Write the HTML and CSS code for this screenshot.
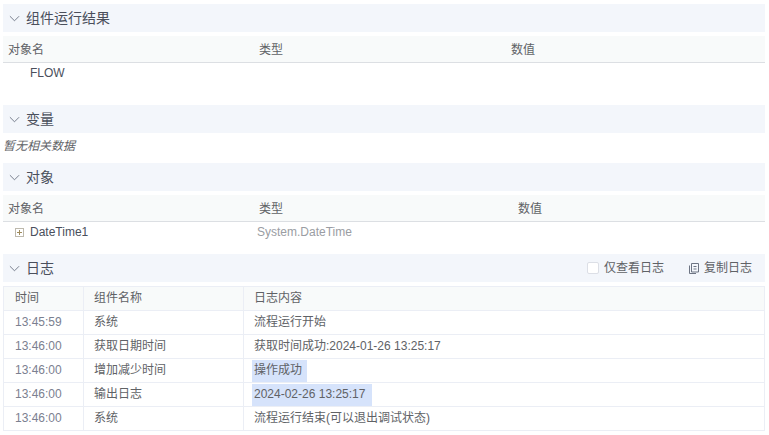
FILE: index.html
```html
<!DOCTYPE html>
<html lang="zh">
<head>
<meta charset="utf-8">
<title>调试结果</title>
<link rel="stylesheet" href="styles.css">
</head>
<body>
<main class="page">
  <section class="section sec-result">
    <header class="bar">
      <svg class="chev" viewBox="0 0 12 12"><path d="M1 3.500 6 8.500 11 3.500"/></svg>
      <h2>组件运行结果</h2>
    </header>
    <div class="thead">
      <span class="c1">对象名</span><span class="c2">类型</span><span class="c3">数值</span>
    </div>
    <div class="trow"><span class="c1 name indent">FLOW</span></div>
  </section>

  <section class="section sec-var">
    <header class="bar">
      <svg class="chev" viewBox="0 0 12 12"><path d="M1 3.500 6 8.500 11 3.500"/></svg>
      <h2>变量</h2>
    </header>
    <p class="empty">暂无相关数据</p>
  </section>

  <section class="section sec-obj">
    <header class="bar">
      <svg class="chev" viewBox="0 0 12 12"><path d="M1 3.500 6 8.500 11 3.500"/></svg>
      <h2>对象</h2>
    </header>
    <div class="thead">
      <span class="c1">对象名</span><span class="c2">类型</span><span class="c3 wide">数值</span>
    </div>
    <div class="trow">
      <span class="c1 name tree">
        <svg class="plus" viewBox="0 0 9 9"><rect x=".5" y=".5" width="8" height="8"/><path d="M2 4.500h5M4.500 2v5"/></svg>DateTime1
      </span>
      <span class="c2 type">System.DateTime</span>
    </div>
  </section>

  <section class="section">
    <header class="bar">
      <svg class="chev" viewBox="0 0 12 12"><path d="M1 3.500 6 8.500 11 3.500"/></svg>
      <h2>日志</h2>
      <div class="tools">
        <label class="check"><span class="box"></span>仅查看日志</label>
        <span class="copy">
          <svg class="copy-icon" viewBox="0 0 10 11"><path d="M2.500 .5h7v8.500h-7zM.5 2.500v8h6.500M4.500 3.500h3M4.500 6h3"/></svg>复制日志
        </span>
      </div>
    </header>
    <table class="log">
      <thead><tr><th>时间</th><th>组件名称</th><th>日志内容</th></tr></thead>
      <tbody>
        <tr><td>13:45:59</td><td>系统</td><td>流程运行开始</td></tr>
        <tr><td>13:46:00</td><td>获取日期时间</td><td>获取时间成功:2024-01-26 13:25:17</td></tr>
        <tr><td>13:46:00</td><td>增加减少时间</td><td class="hl"><mark>操作成功</mark></td></tr>
        <tr><td>13:46:00</td><td>输出日志</td><td class="hl"><mark class="date">2024-02-26 13:25:17</mark></td></tr>
        <tr><td>13:46:00</td><td>系统</td><td>流程运行结束(可以退出调试状态)</td></tr>
      </tbody>
    </table>
  </section>
</main>
</body>
</html>
```
FILE: styles.css
```css
* { box-sizing: border-box; }
html, body { margin: 0; height: 100%; overflow: hidden; background: #fff; }
body { font: 12px/18px "Liberation Sans", "Noto Sans CJK SC", sans-serif; color: #606266; }
.page { padding: 4px 4px 0 3px; }

.bar {
  height: 28px;
  display: flex;
  align-items: center;
  padding-left: 6px;
  background: #f3f6fb;
}
.bar h2 { margin: 0 0 0 6px; font-size: 14px; font-weight: 400; color: #4a4f5c; }
.chev { width: 11px; height: 11px; flex: none; }
.chev path { fill: none; stroke: #6d7483; stroke-width: 1; }

.sec-result { height: 101px; }
.sec-var { height: 58px; }
.sec-obj { height: 91px; }

.thead {
  margin-top: 4px;
  height: 27px;
  padding-top: 2px;
  display: flex;
  align-items: center;
  background: #f8fafa;
  border-bottom: 1px solid #dcdfe3;
}
.trow { height: 20px; display: flex; align-items: center; }
.c1 { width: 251px; padding-left: 5px; flex: none; }
.c2 { width: 252px; padding-left: 5px; flex: none; }
.c3 { padding-left: 5px; }
.c3.wide { padding-left: 12px; }
.name { color: #4a4f5c; }
.indent { padding-left: 27px; }
.tree { display: flex; align-items: center; padding-left: 12px; }
.type { color: #9a9da3; padding-left: 3px; }
.plus { width: 9px; height: 9px; margin-right: 6px; }
.plus rect { fill: #fff; stroke: #bdb9ad; }
.plus path { fill: none; stroke: #a08b5c; }
.empty { margin: 0; padding-top: 1px; font-style: italic; height: 24px; line-height: 24px; color: #606266; }

.tools { margin-left: auto; padding-right: 13px; display: flex; align-items: center; gap: 25px; color: #606266; }
.check, .copy { display: flex; align-items: center; }
.box { width: 12px; height: 12px; margin-right: 5px; border: 1px solid #dcdfe6; border-radius: 2px; background: #fff; }
.copy-icon { width: 10px; height: 11px; margin-right: 5px; }
.copy-icon path { fill: none; stroke: #6d7483; }

.log {
  margin-top: 4px;
  width: 762px;
  border-collapse: collapse;
  table-layout: fixed;
}
.log th, .log td {
  height: 24px;
  padding: 0 10px 2px;
  border: 1px solid #ebeef5;
  font-weight: 400;
  text-align: left;
  white-space: nowrap;
}
.log th { background: #f8fafa; color: #606266; }
.log th:nth-child(1), .log td:nth-child(1) { width: 80px; padding-left: 11px; color: #7b8090; }
.log th:nth-child(1) { color: #606266; }
.log th:nth-child(2), .log td:nth-child(2) { width: 160px; }
.log td.hl { padding-bottom: 0; }
.log mark {
  display: block;
  width: 55px;
  height: 22px;
  line-height: 20px;
  margin-left: -2px;
  padding-left: 2px;
  background: #d6e3fb;
  color: #606266;
}
.log mark.date { width: 120px; }
```
